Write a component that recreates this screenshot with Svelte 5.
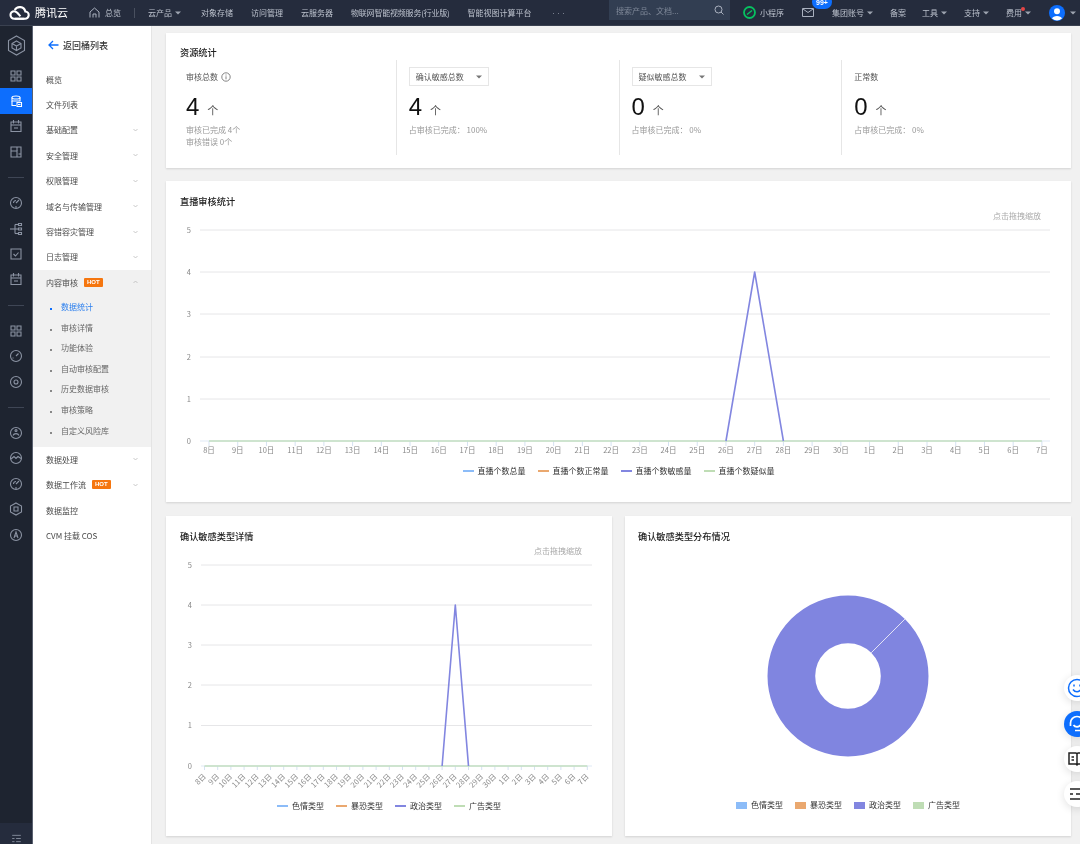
<script>
  const circ = 'M1.5 7a5.5 5.5 0 1 0 11 0a5.5 5.5 0 1 0-11 0';
  const icons = {
    grid: ['M2 2h4v4H2z', 'M8 2h4v4H8z', 'M2 8h4v4H2z', 'M8 8h4v4H8z'],
    db: ['M3 3.5C3 1.5 11 1.5 11 3.5V7H3z', 'M3 3.5C3 5.5 11 5.5 11 3.5', 'M3 7v4.5h4', 'M8 8.5h4.5v4H8z', 'M9 10.5h2.5'],
    cal: ['M2 3h10v9.5H2z', 'M4.5 1v3.5', 'M9.5 1v3.5', 'M2 6h10', 'M5 9h4'],
    board: ['M2 2h10v10H2z', 'M2 6h6v6', 'M8 2v4', 'M9.5 9h2.5'],
    gauge: [circ, 'M7 7l3-3', 'M4.5 7a2.5 2.5 0 0 1 2.5-2.5', 'M7 10v2'],
    tree: ['M1 7h5', 'M6 2.5v9', 'M6 2.5h3', 'M6 7h3', 'M6 11.5h3', 'M9.5 1.5h3v2h-3z', 'M9.5 6h3v2h-3z', 'M9.5 10.5h3v2h-3z'],
    check: ['M2 2h10v10H2z', 'M4.5 7l2 2 3-3.5'],
    speed: [circ, 'M7 7l2.5-2.5', 'M3.5 9h1'],
    target: [circ, 'M5 7a2 2 0 1 0 4 0a2 2 0 1 0-4 0'],
    face: [circ, 'M4 9.5c1-2.5 5-2.5 6 0', 'M6 4.5a1 1 0 1 0 2 0a1 1 0 1 0-2 0'],
    wave: [circ, 'M2 8l3-2.5 2 2 2-2 3 2'],
    hexc: ['M7 1l5.5 3v6L7 13l-5.5-3V4z', 'M5 5h4v4H5z'],
    letter: [circ, 'M5 10l2-6 2 6', 'M5.7 8h2.6'],
    list: ['M1.5 3h11', 'M1.5 7h3', 'M6.5 7h6', 'M1.5 11h3', 'M6.5 11h6']
  };
  const railGroups = [
    ['grid', 'db', 'cal', 'board'],
    ['gauge', 'tree', 'check', 'cal'],
    ['grid', 'speed', 'target'],
    ['face', 'wave', 'gauge', 'hexc', 'letter']
  ];
  const navTop = [
    { t: '概览' }, { t: '文件列表' }, { t: '基础配置', c: 1 }, { t: '安全管理', c: 1 }, { t: '权限管理', c: 1 },
    { t: '域名与传输管理', c: 1 }, { t: '容错容灾管理', c: 1 }, { t: '日志管理', c: 1 }
  ];
  const subs = ['数据统计', '审核详情', '功能体验', '自动审核配置', '历史数据审核', '审核策略', '自定义风险库'];
  const navBottom = [
    { t: '数据处理', c: 1 }, { t: '数据工作流', c: 1, hot: 1 }, { t: '数据监控' }, { t: 'CVM 挂载 COS' }
  ];
  const topLinks = ['对象存储', '访问管理', '云服务器', '物联网智能视频服务(行业版)', '智能视图计算平台'];
  const stats = [
    { label: '审核总数', info: 1, n: 4, sub: ['审核已完成 4个', '审核错误 0个'] },
    { label: '确认敏感总数', sel: 1, n: 4, sub: ['占审核已完成： 100%'] },
    { label: '疑似敏感总数', sel: 1, n: 0, sub: ['占审核已完成： 0%'] },
    { label: '正常数', n: 0, sub: ['占审核已完成： 0%'] }
  ];
  const days = [...Array.from({ length: 23 }, (_, i) => i + 8), ...Array.from({ length: 7 }, (_, i) => i + 1)].map((d) => d + '日');

  const c1 = { x0: 34, x1: 884, first: 43, step: 28.72, ys: [8, 50, 92, 135, 177, 219], tick: 5 };
  const c2 = { x0: 35, x1: 426, first: 38.5, step: 13.2, ys: [8, 48, 88, 128, 168.5, 209], tick: 4 };
  const xs = (c) => days.map((_, i) => c.first + i * c.step);
  const spike = (c) => `M${c.first + 18 * c.step} ${c.ys[5]} L${c.first + 19 * c.step} ${c.ys[1]} L${c.first + 20 * c.step} ${c.ys[5]}`;
  const legend1 = ['直播个数总量', '直播个数正常量', '直播个数敏感量', '直播个数疑似量'];
  const legend2 = ['色情类型', '暴恐类型', '政治类型', '广告类型'];
  const colors = ['#8cbcf8', '#eaa86f', '#8286e0', '#bfddb5'];
</script>

{#snippet icon(name, size = 14)}
  <svg class="ic" width={size} height={size} viewBox="0 0 14 14">
    {#each icons[name] as d}<path {d} />{/each}
  </svg>
{/snippet}

{#snippet caret()}
  <svg class="caret" width="6" height="4" viewBox="0 0 6 4"><path d="M0 .5h6L3 3.5z" /></svg>
{/snippet}

{#snippet chev(up = false)}
  <svg class="chev" class:up width="5" height="4" viewBox="0 0 5 4"><path d="M.5 1l2 2 2-2" /></svg>
{/snippet}

{#snippet legend(items, swatch = false)}
  <div class="legend">
    {#each items as t, i}
      <div class="lg">
        <i class={swatch ? 'sw' : 'ln'} style="background:{colors[i]}"></i>
        <span>{t}</span>
      </div>
    {/each}
  </div>
{/snippet}

{#snippet chart(c, h, rotate)}
  <svg class="plot" width="100%" height={h}>
    {#each c.ys as y, i}
      {#if i < 5}<line x1={c.x0} x2={c.x1} y1={y} y2={y} stroke="#e6e6e8" stroke-width="1" />{/if}
      <text x={c.x0 - 9} y={y + 2.5} text-anchor="end" class="tk">{5 - i}</text>
    {/each}
    <line x1={c.x0} x2={c.x1} y1={c.ys[5]} y2={c.ys[5]} stroke="#dfe9f5" />
    {#each xs(c) as x, i}
      <line x1={x} x2={x} y1={c.ys[5]} y2={c.ys[5] + c.tick} stroke="#d5e2f2" />
      {#if rotate}
        <text class="tk" text-anchor="end" transform="translate({x + 2} {c.ys[5] + 11}) rotate(-45)">{days[i]}</text>
      {:else}
        <text class="tk" x={x} y={c.ys[5] + 12} text-anchor="middle">{days[i]}</text>
      {/if}
    {/each}
    <line x1={c.first} x2={c.first + 29 * c.step} y1={c.ys[5]} y2={c.ys[5]} stroke="#c3dfc0" stroke-width="1.3" />
    <path d={spike(c)} fill="none" stroke="#8286e0" stroke-width="1.6" stroke-linejoin="round" />
  </svg>
{/snippet}

<div class="page">
  <header class="top">
    <div class="brand">
      <svg width="23" height="15" viewBox="0 0 24 15" fill="none" stroke="#fff" stroke-width="2.200">
        <path d="M7 14h10.500a3.800 3.800 0 0 0 .6-7.600A6 6 0 0 0 7 5" />
        <path d="M17 14H6.500a3.900 3.900 0 1 1 0-7.800c3 0 4.500 3.300 6.500 5.300" />
      </svg>
      <b>腾讯云</b>
    </div>
    <div class="home">
      <svg width="11" height="11" viewBox="0 0 11 11" fill="none" stroke="#aab1bf"><path d="M1 10.500V5L5.500 1 10 5v5.500M4 10.500V7h3v3.500" /></svg>
      <span>总览</span>
    </div>
    <i class="vsep"></i>
    <div class="links">
      <span class="drop">云产品 {@render caret()}</span>
      {#each topLinks as l}<span>{l}</span>{/each}
    </div>
    <span class="dots">•••</span>
    <div class="search">
      <span>搜索产品、文档...</span>
      <svg width="10" height="10" viewBox="0 0 10 10" fill="none" stroke="#aab1bf" stroke-width="1"><circle cx="4.500" cy="4.500" r="3.500" /><path d="M7 7l2.500 2.500" /></svg>
    </div>
    <div class="tools">
      <span class="mini">
        <svg width="13" height="13" viewBox="0 0 13 13"><circle cx="6.500" cy="6.500" r="5.500" fill="none" stroke="#07c160" stroke-width="1.800" /><path d="M4 8.500l5-4" stroke="#07c160" stroke-width="1.500" /></svg>
        小程序
      </span>
      <span class="mail">
        <svg width="12" height="9" viewBox="0 0 12 9" fill="none" stroke="#aab1bf"><path d="M.5.500h11v8H.5z" /><path d="M1 1l5 3.500L11 1" /></svg>
        <em>99+</em>
      </span>
      <span class="drop">集团账号 {@render caret()}</span>
      <span>备案</span>
      <span class="drop">工具 {@render caret()}</span>
      <span class="drop">支持 {@render caret()}</span>
      <span class="drop fee">费用 {@render caret()}</span>
      <span class="drop av">
        <svg width="16" height="16" viewBox="0 0 16 16"><circle cx="8" cy="8" r="8" fill="#0d6efd" /><circle cx="8" cy="6.300" r="3" fill="#fff" /><path d="M3 13.500c1-3.500 9-3.500 10 0a8 8 0 0 1-10 0z" fill="#fff" /></svg>
        {@render caret()}
      </span>
    </div>
  </header>

  <div class="body">
    <aside class="rail">
      <div class="hex">
        <svg width="19" height="21" viewBox="0 0 19 21" fill="none" stroke="#8b93a3" stroke-width="1.100">
          <path d="M9.500 1l8 4.500v10l-8 4.500-8-4.500v-10z" />
          <path d="M9.500 6l4.500 2.500v4.500l-4.500 2.500L5 13V8.500zM5 8.500l4.500 2.500L14 8.500M9.500 11v4.500" />
        </svg>
      </div>
      {#each railGroups as g, gi}
        {#if gi > 0}<i class="rsep"></i>{/if}
        {#each g as n, ni}
          <div class="ri" class:on={gi === 0 && ni === 1}>{@render icon(n)}</div>
        {/each}
      {/each}
      <div class="rfoot">{@render icon('list', 11)}</div>
    </aside>

    <nav class="nav">
      <div class="back">
        <svg width="11" height="10" viewBox="0 0 11 10" fill="none" stroke="#0d6efd" stroke-width="1.300"><path d="M10.500 5H1M5 1L1 5l4 4" /></svg>
        <b>返回桶列表</b>
      </div>
      {#each navTop as n}
        <div class="ni"><span>{n.t}</span>{#if n.c}{@render chev()}{/if}</div>
      {/each}
      <div class="open">
        <div class="ni"><span>内容审核</span><em class="hot">HOT</em>{@render chev(true)}</div>
        <ul>
          {#each subs as s, i}
            <li class:cur={i === 0}>{s}</li>
          {/each}
        </ul>
      </div>
      {#each navBottom as n}
        <div class="ni"><span>{n.t}</span>{#if n.hot}<em class="hot">HOT</em>{/if}{#if n.c}{@render chev()}{/if}</div>
      {/each}
    </nav>

    <main class="main">
      <section class="card stats">
        <h3>资源统计</h3>
        <div class="cols">
          {#each stats as s}
            <div class="col">
              {#if s.sel}
                <div class="sel"><span>{s.label}</span>{@render caret()}</div>
              {:else}
                <div class="lab">
                  <span>{s.label}</span>
                  {#if s.info}<svg width="10" height="10" viewBox="0 0 10 10" fill="none" stroke="#666" stroke-width=".8"><circle cx="5" cy="5" r="4.200" /><path d="M5 4.300v3M5 2.500v1" /></svg>{/if}
                </div>
              {/if}
              <div class="num"><strong>{s.n}</strong><small>个</small></div>
              <div class="sub">{#each s.sub as t}<p>{t}</p>{/each}</div>
            </div>
          {/each}
        </div>
      </section>

      <section class="card c-wide">
        <h3>直播审核统计</h3>
        <p class="hint">点击拖拽缩放</p>
        {@render chart(c1, 232, false)}
        {@render legend(legend1)}
      </section>

      <div class="row">
        <section class="card c-half">
          <h3>确认敏感类型详情</h3>
          <p class="hint">点击拖拽缩放</p>
          {@render chart(c2, 236, true)}
          {@render legend(legend2)}
        </section>
        <section class="card c-half">
          <h3 class="tight">确认敏感类型分布情况</h3>
          <svg class="plot donut" width="100%" height="262" viewBox="0 0 446 262">
            <circle cx="223" cy="133" r="56.650" fill="none" stroke="#8085e0" stroke-width="47.700" />
            <path d="M246.200 109.800L279.900 76.100" stroke="#e4e5f6" stroke-width="1" />
          </svg>
          {@render legend(legend2, true)}
        </section>
      </div>
    </main>
  </div>

  <div class="float">
    <div class="fb">
      <svg width="20" height="20" viewBox="0 0 20 20" fill="none" stroke="#0d6efd" stroke-width="1.500"><circle cx="10" cy="10" r="8.500" /><path d="M6 11.500c2 3 6 3 8 0M7 6.500v2M13 6.500v2" /></svg>
    </div>
    <div class="fb blue">
      <svg width="20" height="20" viewBox="0 0 20 20" fill="none" stroke="#fff" stroke-width="1.700"><path d="M3.500 12V9a6.500 6.500 0 0 1 13 0v3" /><path d="M6.500 11c1.500 2.500 5.500 2.500 7 0M8 16.500h5" /></svg>
    </div>
    <div class="fb">
      <svg width="20" height="20" viewBox="0 0 20 20" fill="none" stroke="#222" stroke-width="1.500"><path d="M2 4h7l1 1 1-1h7v11h-7l-1 1-1-1H2zM10 5v11M4.500 8H7M4.500 11H7M13 8h2.500M13 11h2.500" /></svg>
    </div>
    <div class="fb">
      <svg width="20" height="20" viewBox="0 0 20 20" fill="none" stroke="#222" stroke-width="1.500"><path d="M3 5h14M3 10h3M9 10h8M3 15h14" /></svg>
    </div>
  </div>
</div>

<style>
  :global(body) { margin: 0; }
  .page {
    position: relative;
    width: 1080px;
    height: 844px;
    overflow: hidden;
    background: #f1f1f1;
    font-family: "Noto Sans CJK SC", "Liberation Sans", sans-serif;
    font-size: 8px;
    color: #444;
    filter: blur(0.35px);
  }
  .ic { fill: none; stroke: currentColor; stroke-width: 1.100; display: block; }
  .caret { fill: currentColor; display: inline-block; vertical-align: 1px; opacity: 0.8; }
  .chev { fill: none; stroke: #bbb; stroke-width: 0.800; }
  .chev.up { transform: rotate(180deg); }

  /* top bar */
  .top {
    height: 26px;
    background: #252c3d;
    border-bottom: 1px solid #3a4150;
    box-sizing: border-box;
    display: flex;
    align-items: center;
    color: #bcc2cd;
    white-space: nowrap;
  }
  .brand { display: flex; align-items: center; gap: 4px; margin-left: 8px; width: 81px; flex: none; color: #fff; }
  .brand b { font-size: 11px; font-weight: 400; line-height: 1; }
  .home { display: flex; align-items: center; gap: 5px; width: 45px; flex: none; }
  .vsep { width: 1px; height: 10px; background: #49505f; margin-right: 13px; flex: none; }
  .links { display: flex; gap: 18px; width: 384px; flex: none; }
  .links > span:nth-child(5) { letter-spacing: -0.200px; }
  .drop { display: inline-flex; align-items: center; gap: 3px; }
  .links .drop { margin-right: 2px; }
  .dots { width: 58px; flex: none; font-size: 5px; color: #8f96a4; margin-left: 19px; }
  .search {
    width: 121px;
    height: 20px;
    margin-top: -5px;
    padding: 0 6px 0 7px;
    box-sizing: border-box;
    background: #323e52;
    display: flex;
    align-items: center;
    justify-content: space-between;
    color: #7f8898;
    flex: none;
  }
  .tools { display: flex; align-items: center; margin-left: 13px; }
  .mini { display: flex; align-items: center; gap: 4px; width: 59px; }
  .mail { position: relative; display: flex; width: 30px; }
  .mail em {
    position: absolute;
    left: 10px;
    top: -13px;
    padding: 3px 4px 1px;
    background: #0d6efd;
    border-radius: 7px;
    color: #fff;
    font: 700 7px/10px "Liberation Sans", sans-serif;
  }
  .tools > span:nth-child(3) { width: 58px; }
  .tools > span:nth-child(4) { width: 32px; }
  .tools > span:nth-child(5), .tools > span:nth-child(6) { width: 42px; }
  .fee { position: relative; width: 43px; }
  .fee::after {
    content: "";
    position: absolute;
    left: 15px;
    top: 0;
    width: 4px;
    height: 4px;
    border-radius: 50%;
    background: #e54545;
  }
  .av { gap: 5px; }

  .body { display: flex; height: 818px; }

  /* rail */
  .rail {
    width: 32px;
    flex: none;
    background: #1e2430;
    border-right: 1px solid #5a6170;
    color: #8b93a3;
    display: flex;
    flex-direction: column;
    align-items: stretch;
  }
  .hex { height: 37px; display: flex; align-items: center; justify-content: center; padding-top: 1px; box-sizing: border-box; flex: none; }
  .ri { height: 25.400px; display: flex; align-items: center; justify-content: center; flex: none; }
  .ri.on { background: #0d6efd; color: #fff; }
  .rsep { display: block; height: 1px; width: 16px; margin: 12.500px auto; background: #3f4655; flex: none; }
  .rfoot {
    margin-top: auto;
    height: 21px;
    background: #252c3d;
    display: flex;
    align-items: flex-start;
    justify-content: center;
    padding-top: 10px;
    box-sizing: border-box;
  }

  /* nav */
  .nav {
    width: 118px;
    flex: none;
    background: #fff;
    border-right: 1px solid #e4e4e4;
    white-space: nowrap;
  }
  .back { height: 40.500px; padding: 0 0 2px 15px; box-sizing: border-box; display: flex; align-items: center; gap: 4px; color: #333; }
  .back b { font-size: 9px; font-weight: 500; }
  .ni { height: 25.400px; display: flex; align-items: center; padding: 0 13px; gap: 6px; color: #4a4a4a; }
  .ni :global(.chev) { margin-left: auto; }
  .hot {
    font: 700 6px/9px "Liberation Sans", sans-serif;
    color: #fff;
    background: #f5760f;
    padding: 0 3px;
    border-radius: 1px;
  }
  .open { background: #f1f1f1; height: 177px; }
  .open ul { list-style: none; margin: 2px 0 0; padding: 0; }
  .open li {
    height: 20.600px;
    line-height: 20.600px;
    padding-left: 28px;
    position: relative;
    color: #666;
  }
  .open li::before {
    content: "";
    position: absolute;
    left: 17px;
    top: 11px;
    width: 2px;
    height: 2px;
    background: #888;
  }
  .open li.cur { color: #2b7fee; }
  .open li.cur::before { background: #0d6efd; }

  /* main */
  .main { flex: 1; min-width: 0; padding: 7px 9px 0 14px; display: flex; flex-direction: column; gap: 13px; }
  .card { background: #fff; box-shadow: 0 1px 2px rgba(0, 0, 0, 0.13); }
  h3 { margin: 0; padding: 0 0 2px 14px; font-size: 9.200px; line-height: 10px; font-weight: 500; color: #222; }
  h3.tight { padding-left: 13px; }
  .stats { height: 135px; padding-top: 14px; box-sizing: border-box; flex: none; }
  .cols { display: grid; grid-template-columns: repeat(4, 222.750px); padding-left: 7px; height: 95px; margin-top: 1px; }
  .col { padding: 7px 0 0 12px; border-left: 1px solid #e6e6e6; }
  .col:first-child { border-left: 0; padding-left: 13px; }
  .lab { height: 19px; display: flex; align-items: center; gap: 3px; color: #555; }
  .sel {
    width: 80px;
    height: 19px;
    box-sizing: border-box;
    border: 1px solid #e6e6e6;
    display: flex;
    align-items: center;
    justify-content: space-between;
    padding: 0 6px;
    color: #555;
  }
  .num { display: flex; align-items: baseline; gap: 8px; margin-top: 9px; height: 24px; line-height: 24px; }
  .num strong { font: 400 24px/24px "Liberation Sans", sans-serif; color: #111; }
  .num small { font-size: 11px; color: #555; }
  .sub { margin-top: 5px; color: #999; }
  .sub p { margin: 0; line-height: 12px; }

  .c-wide { height: 321px; padding-top: 15px; box-sizing: border-box; flex: none; }
  .hint { margin: 2px 30px 0 0; text-align: right; line-height: 12px; color: #aaa; }
  .plot { display: block; }
  .tk { font-size: 7.500px; fill: #888; }
  .legend { display: flex; justify-content: center; gap: 12px; margin-top: 7px; line-height: 12px; color: #333; }
  .c-wide .legend { margin-top: 11px; }
  .lg { display: flex; align-items: center; gap: 4px; }
  .ln { width: 11px; height: 1.500px; display: block; }
  .sw { width: 11px; height: 7px; display: block; }
  .row { display: grid; grid-template-columns: 446px 446px; gap: 13px; margin-top: 1px; }
  .c-half { height: 320px; padding-top: 15px; box-sizing: border-box; }
  .c-half .donut + .legend { margin-top: -6px; }

  .float {
    position: absolute;
    right: -10px;
    top: 675.300px;
    display: flex;
    flex-direction: column;
    gap: 9.300px;
  }
  .fb {
    width: 26px;
    height: 26px;
    border-radius: 50%;
    background: #fff;
    box-shadow: 0 2px 8px rgba(0, 0, 0, 0.12);
    display: flex;
    align-items: center;
    justify-content: center;
  }
  .fb.blue { background: #0d6efd; }
</style>
